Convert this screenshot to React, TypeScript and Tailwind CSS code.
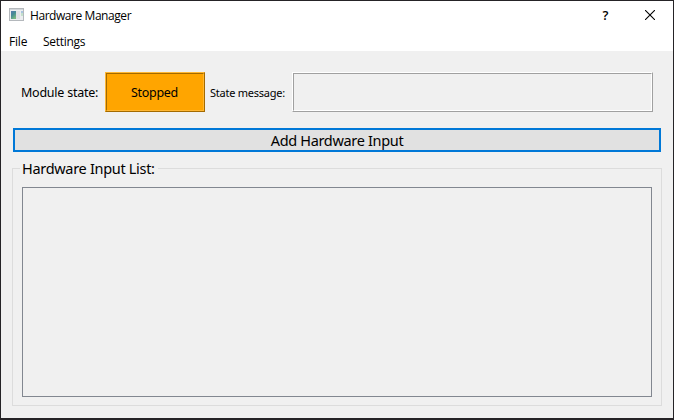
import React from "react";

const uiFont = "font-['Open_Sans','Noto_Sans',sans-serif]";
const bodyFont = "font-['Noto_Sans','DejaVu_Sans',sans-serif]";

function AppIcon() {
  return (
    <svg width="15" height="13" viewBox="0 0 15 13" shapeRendering="crispEdges">
      <defs>
        <linearGradient id="pane" x1="0" y1="0" x2="0.6" y2="1">
          <stop offset="0" stopColor="#5578b0" />
          <stop offset="0.5" stopColor="#458c94" />
          <stop offset="1" stopColor="#78b880" />
        </linearGradient>
      </defs>
      <rect width="15" height="13" fill="#b4b8bc" />
      <rect x="1" y="1" width="13" height="1" fill="#d2d6da" />
      <rect x="1" y="2" width="13" height="10" fill="#eceef0" />
      <rect x="2" y="3" width="5" height="8" fill="url(#pane)" />
      <rect x="7" y="3" width="4" height="8" fill="#dfe1e5" />
      <rect x="12" y="3" width="2" height="2" fill="#a9c4e0" />
      <rect x="12" y="5" width="2" height="3" fill="#c3e0cc" />
    </svg>
  );
}

function TitleBar() {
  return (
    <header className="flex h-[30px] shrink-0 items-center bg-white pl-2 pr-px">
      <div className="-mt-[3px]">
        <AppIcon />
      </div>
      <h1 className="ml-1.5 text-[12px] leading-[16px] tracking-[-0.44px]">Hardware Manager</h1>
      <div className="ml-auto flex h-full">
        <button aria-label="Help" className="-mt-0.5 flex w-[45px] items-center justify-center pl-0.5 text-[13px] font-semibold leading-[16px]">
          ?
        </button>
        <button aria-label="Close" className="-mt-0.5 flex w-[45px] items-center justify-center">
          <svg width="10" height="10" viewBox="0 0 10 10" stroke="#000" strokeWidth="1.1">
            <path d="M0 0L10 10M10 0L0 10" />
          </svg>
        </button>
      </div>
    </header>
  );
}

function MenuBar() {
  return (
    <nav className="flex h-5 shrink-0 items-center bg-white pl-2 pt-0.5 text-[12px] leading-[16px]">
      <span className="w-[34px] tracking-[-0.2px]">File</span>
      <span className="tracking-[-0.3px]">Settings</span>
    </nav>
  );
}

export default function App() {
  return (
    <div className={`flex h-[420px] w-[674px] flex-col overflow-hidden border border-b-2 border-[#252326] bg-[#f0f0f0] text-black ${uiFont}`}>
      <TitleBar />
      <MenuBar />
      <main className={`flex flex-1 flex-col pl-[11px] pr-[11px] pt-[21px] ${bodyFont}`}>
        <section className="flex h-10 items-center pl-[9px]">
          <span className="w-[84px] shrink-0 whitespace-nowrap pt-0.5 text-[12.5px] leading-[16px] tracking-[-0.24px]">Module state:</span>
          <div className="h-10 w-[100px] shrink-0 border border-b-[#a36a00] border-l-[#ffb733] border-r-[#a36a00] border-t-[#ffb733]">
            <div className="flex h-full items-center justify-center border border-b-[#ffb733] border-l-[#a36a00] border-r-[#ffb733] border-t-[#a36a00] bg-[#ffa500] pr-px pt-0.5 text-[12.5px] leading-[16px] tracking-[-0.3px]">
              Stopped
            </div>
          </div>
          <span className="ml-[5px] w-[82px] shrink-0 whitespace-nowrap pt-0.5 text-[11px] leading-[16px] tracking-[-0.25px]">State message:</span>
          <div className="h-10 w-[361px] shrink-0 border border-b-[#a0a0a0] border-l-white border-r-[#a0a0a0] border-t-white">
            <div className="h-full border border-b-white border-l-[#a0a0a0] border-r-white border-t-[#a0a0a0]" />
          </div>
        </section>
        <button className="ml-px mt-4 flex h-6 w-[648px] items-center justify-center border-2 border-[#0078d7] bg-[#e1e1e1] text-[14.5px] leading-[20px] tracking-[-0.33px]">
          Add Hardware Input
        </button>
        <section className="mt-4 flex h-[238px] w-[650px] flex-col border border-[#dcdcdc] px-[9px] pb-2">
          <h2 className="-ml-0.5 -mt-[11px] h-5 self-start whitespace-nowrap bg-[#f0f0f0] pl-0.5 pr-[3px] text-[14.5px] leading-[20px] tracking-[-0.31px]">
            Hardware Input List:
          </h2>
          <div className="mt-[9px] flex-1 border border-[#828790]" />
        </section>
      </main>
    </div>
  );
}
